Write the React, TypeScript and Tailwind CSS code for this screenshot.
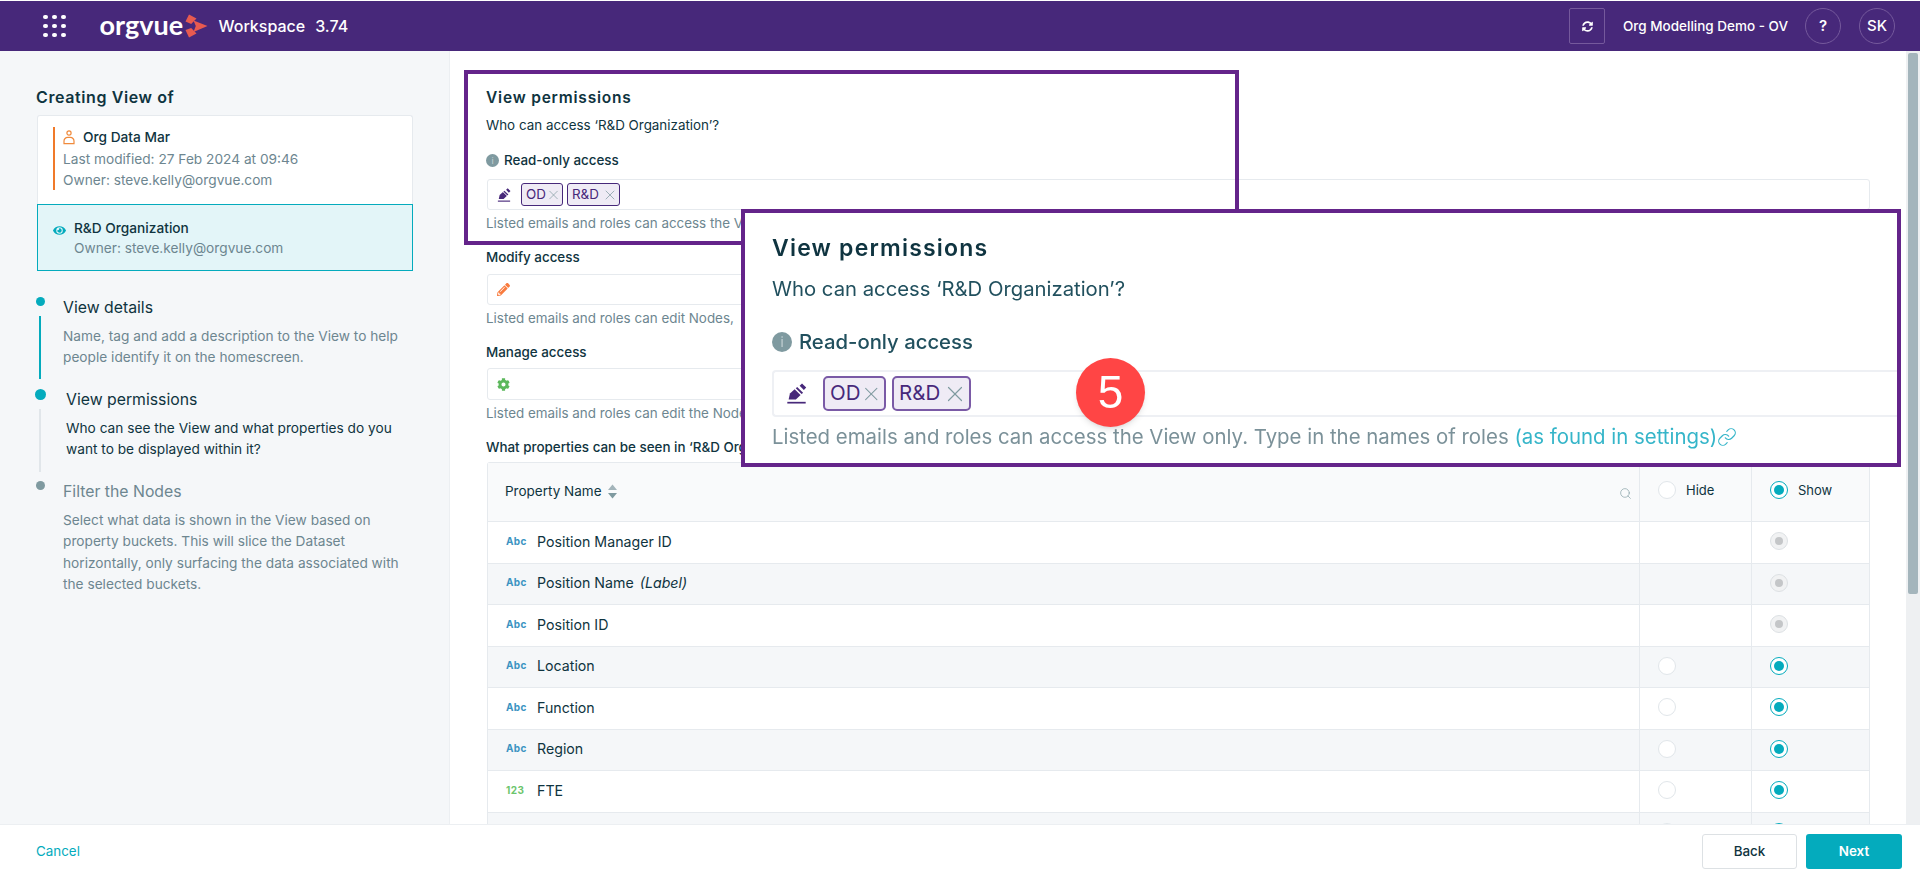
import { FaCog, FaEye, FaPencilAlt, FaSyncAlt } from "react-icons/fa"
import { Link, Search, X } from "lucide-react"

const sans = "font-['Inter',sans-serif]"

const rows = [
  { kind: "Abc", name: "Position Manager ID", locked: true },
  { kind: "Abc", name: "Position Name", label: true, locked: true },
  { kind: "Abc", name: "Position ID", locked: true },
  { kind: "Abc", name: "Location" },
  { kind: "Abc", name: "Function" },
  { kind: "Abc", name: "Region" },
  { kind: "123", name: "FTE" },
  { kind: "", name: "" },
]

function ReadOnlyIcon({ size }: { size: number }) {
  return (
    <svg width={size} height={size} viewBox="0 0 16 16" className="text-[#47287a] shrink-0">
      <path d="M1 15h14" stroke="currentColor" strokeWidth="1.3" />
      <path d="M2 12.6 3 8 8.5 3 13 7.5 7.5 12.6Z" fill="currentColor" />
      <path d="M10.4 2 12.2 0.4 15.4 3.4 13.6 5.4Z" fill="currentColor" />
      <path d="M4.6 2 14 11.2" stroke="#fff" strokeWidth="1.1" />
    </svg>
  )
}

function PersonIcon() {
  return (
    <svg width="12" height="15" viewBox="0 0 12 15" fill="none" stroke="#f08a3c" strokeWidth="1.2" className="shrink-0">
      <circle cx="6" cy="3" r="2.1" />
      <path d="M1 13.6V11a3.6 3.6 0 0 1 3.6-3.6h2.8A3.6 3.6 0 0 1 11 11v2.6Z" />
    </svg>
  )
}

function InfoIcon({ big }: { big?: boolean }) {
  return (
    <span
      className={
        big
          ? "w-5 h-5 rounded-full bg-[#7f9aa0] text-[#c5d2d5] text-[13px] leading-5 text-center shrink-0"
          : "w-[13px] h-[13px] rounded-full bg-[#7f9aa0] text-[#c5d2d5] text-[9px] leading-[13px] text-center shrink-0"
      }
    >
      i
    </span>
  )
}

function Chip({ text, big, wide }: { text: string; big?: boolean; wide?: boolean }) {
  if (big) {
    return (
      <span className={`${wide ? "w-[79px]" : "w-[63px]"} h-[35px] flex items-center justify-between border-2 border-[#7a5aa6] rounded-[5px] bg-[#efebf5] text-[#47287a] text-[20.5px] pl-[5px] pr-[1px]`}>
        {text}
        <X size={26} strokeWidth={1.1} className="text-[#7f9aa0]" />
      </span>
    )
  }
  return (
    <span className={`${wide ? "w-[53px]" : "w-[42px]"} h-[23px] flex items-center justify-between border border-[#47287a] rounded-[3px] bg-[#efebf5] text-[#47287a] text-[13.4px] pl-[4px] pr-[1px]`}>
      {text}
      <X size={16} strokeWidth={1.1} className="text-[#7f9aa0]" />
    </span>
  )
}

function InputBox({ children, tall }: { children?: React.ReactNode; tall?: boolean }) {
  return (
    <div className={`${tall ? "h-[32px]" : "h-[31px]"} border border-[#e6eaee] rounded-[3px] bg-white flex items-center pl-[9px] gap-[10px]`}>
      {children}
    </div>
  )
}

function Help({ children }: { children: React.ReactNode }) {
  return <p className="mt-[3px] h-5 leading-5 text-[13.4px] text-[#6d8690] whitespace-nowrap">{children}</p>
}

function Heading({ children, mt }: { children: React.ReactNode; mt: string }) {
  return <h3 className={`${mt} h-5 leading-5 text-[13.4px] font-medium text-[#0f3440] whitespace-nowrap`}>{children}</h3>
}

function Radio({ state }: { state: "on" | "off" | "locked" }) {
  if (state === "on") {
    return (
      <span className="w-[18px] h-[18px] rounded-full border-[1.5px] border-[#04abbd] bg-white flex items-center justify-center">
        <span className="w-[10px] h-[10px] rounded-full bg-[#04abbd]" />
      </span>
    )
  }
  if (state === "locked") {
    return (
      <span className="w-[18px] h-[18px] rounded-full border border-[#dde1e4] bg-[#f1f2f3] flex items-center justify-center">
        <span className="w-[8px] h-[8px] rounded-full bg-[#c4c6c8]" />
      </span>
    )
  }
  return <span className="block w-[18px] h-[18px] rounded-full border border-[#e1e6ea] bg-white" />
}

function Step({
  dotClass,
  lineClass,
  title,
  text,
  titleClass,
  textClass,
  indent,
  height,
}: {
  dotClass: string
  lineClass?: string
  title: string
  text: string[]
  titleClass: string
  textClass: string
  indent: string
  height: string
}) {
  return (
    <div className={`flex ${height}`}>
      <div className="w-[26px] flex flex-col items-center shrink-0 ml-[27px]">
        <span className={`${dotClass} rounded-full shrink-0`} />
        {lineClass && <span className={`${lineClass} w-[2px] shrink-0`} />}
      </div>
      <div className={indent}>
        <div className={`h-5 leading-5 text-[15.8px] ${titleClass}`}>{title}</div>
        <div className="mt-[8px]">
          {text.map((line) => (
            <div key={line} className={`h-[21.3px] leading-[21.3px] text-[13.7px] whitespace-nowrap ${textClass}`}>
              {line}
            </div>
          ))}
        </div>
      </div>
    </div>
  )
}

export default function App() {
  return (
    <div className={`${sans} relative w-full h-[878px] overflow-hidden flex flex-col bg-white`}>
      {/* Top bar */}
      <header className="mt-px h-[50px] shrink-0 bg-[#47287a] flex items-center text-white">
        <div className="ml-[43px] grid grid-cols-3 gap-x-[4.5px] gap-y-[4.5px]">
          {Array.from({ length: 9 }).map((_, i) => (
            <span key={i} className="w-[4.5px] h-[4.5px] rounded-full bg-white" />
          ))}
        </div>
        <span className="ml-[34px] text-[27px] leading-none font-bold font-['Lato',sans-serif] -mt-[4px] w-[80px] whitespace-nowrap">orgvue</span>
        <svg width="24" height="24" viewBox="0 0 24 24" className="ml-[4px] shrink-0">
          <path d="M5 0.5 12.5 4.5 7.2 10 1.5 7.6Z" fill="#e85a50" />
          <path d="M9.5 6.5 23.5 12 9.5 18 11.8 12Z" fill="#e85a50" />
          <path d="M1.5 16 7.2 14 12.5 19.5 5 23.5Z" fill="#e85a50" />
        </svg>
        <span className="ml-[11px] text-[16px] font-medium">Workspace</span>
        <span className="ml-[10px] text-[16px] font-medium">3.74</span>
        <div className="ml-auto flex items-center mr-[25px]">
          <span className="w-9 h-9 border border-[#75599c] rounded-[2px] flex items-center justify-center">
            <FaSyncAlt size={11} />
          </span>
          <span className="ml-[18px] text-[13.5px] font-medium w-[164px] whitespace-nowrap">Org Modelling Demo - OV</span>
          <span className="ml-[18px] w-9 h-9 rounded-full border border-[#75599c] flex items-center justify-center text-[15px] font-semibold">?</span>
          <span className="ml-[18px] w-9 h-9 rounded-full border border-[#75599c] flex items-center justify-center text-[15px] font-medium">SK</span>
        </div>
      </header>

      <div className="flex-1 min-h-0 flex">
        {/* Sidebar */}
        <aside className="w-[450px] shrink-0 bg-[#f5f7f9] border-r border-[#eceff2]">
          <h2 className="ml-[36px] mt-[36px] h-5 leading-5 text-[16px] font-semibold tracking-[0.6px] text-[#0f3440]">Creating View of</h2>
          <div className="ml-[37px] mt-[8px] w-[376px]">
            <div className="h-[89px] bg-white border border-[#e6eaee] border-b-0 rounded-t-[3px] pt-[12px] pl-[15px]">
              <div className="h-[63px] border-l-2 border-[#f07a2a] pl-[8px]">
                <div className="flex items-center gap-[8px] h-[20px] -mt-[1px]">
                  <PersonIcon />
                  <span className="text-[13.7px] font-medium text-[#0f3440]">Org Data Mar</span>
                </div>
                <div className="mt-[2px] h-[21px] leading-[21px] text-[13.7px] text-[#6d8690] whitespace-nowrap">Last modified: 27 Feb 2024 at 09:46</div>
                <div className="h-[21px] leading-[21px] text-[13.7px] text-[#6d8690] whitespace-nowrap">Owner: steve.kelly@orgvue.com</div>
              </div>
            </div>
            <div className="h-[67px] bg-[#e3f5f8] border border-[#04abbd] pl-[15px] pt-[13px] flex">
              <FaEye size={13} className="text-[#04abbd] mt-[6px] shrink-0" />
              <div className="ml-[8px]">
                <div className="h-[20px] leading-[20px] text-[13.7px] font-medium text-[#0f3440]">R&amp;D Organization</div>
                <div className="h-[21px] leading-[21px] text-[13.7px] text-[#6d8690] whitespace-nowrap">Owner: steve.kelly@orgvue.com</div>
              </div>
            </div>
          </div>
          <div className="mt-[26px]">
            <Step
              height="h-[92px]"
              dotClass="w-[9px] h-[9px] mb-[10px] bg-[#04abbd]"
              lineClass="h-[63px] bg-[#04abbd]"
              title="View details"
              text={["Name, tag and add a description to the View to help", "people identify it on the homescreen."]}
              titleClass="text-[#0f3440]"
              textClass="text-[#6d8690]"
              indent="ml-[10px] mt-px"
            />
            <Step
              height="h-[92px]"
              dotClass="w-[11px] h-[11px] mb-[9px] bg-[#04abbd]"
              lineClass="h-[63px] bg-[#e1e6ea]"
              title="View permissions"
              text={["Who can see the View and what properties do you", "want to be displayed within it?"]}
              titleClass="text-[#0f3440]"
              textClass="text-[#0f3440]"
              indent="ml-[13px] mt-px"
            />
            <Step
              height="h-[110px]"
              dotClass="w-[9px] h-[9px] bg-[#7f9aa0]"
              title="Filter the Nodes"
              text={[
                "Select what data is shown in the View based on",
                "property buckets. This will slice the Dataset",
                "horizontally, only surfacing the data associated with",
                "the selected buckets.",
              ]}
              titleClass="text-[#6d8690]"
              textClass="text-[#6d8690]"
              indent="ml-[10px] mt-px"
            />
          </div>
        </aside>

        {/* Main form */}
        <main className="flex-1 min-w-0 overflow-hidden pl-[36px] pr-[36px]">
          <h2 className="mt-[37px] h-5 leading-5 text-[15.5px] font-semibold tracking-[0.8px] text-[#0f3440]">View permissions</h2>
          <p className="mt-[7px] h-5 leading-5 text-[13.4px] text-[#0f3440]">Who can access ‘R&amp;D Organization’?</p>
          <div className="mt-[15px] h-5 flex items-center gap-[5px]">
            <InfoIcon />
            <span className="text-[13.4px] font-medium text-[#0f3440]">Read-only access</span>
          </div>
          <div className="mt-[9px] ml-px">
            <InputBox>
              <ReadOnlyIcon size={14} />
              <div className="flex gap-[4px]">
                <Chip text="OD" />
                <Chip text="R&D" wide />
              </div>
            </InputBox>
          </div>
          <Help>Listed emails and roles can access the View only.</Help>
          <Heading mt="mt-[14px]">Modify access</Heading>
          <div className="mt-[7px] ml-px">
            <InputBox>
              <FaPencilAlt size={13} className="text-[#f97b3e]" />
            </InputBox>
          </div>
          <Help>Listed emails and roles can edit Nodes,</Help>
          <Heading mt="mt-[14px]">Manage access</Heading>
          <div className="mt-[6px] ml-px">
            <InputBox tall>
              <FaCog size={13} className="text-[#5cb85c]" />
            </InputBox>
          </div>
          <Help>Listed emails and roles can edit the Nodes</Help>
          <Heading mt="mt-[14px]">What properties can be seen in ‘R&amp;D Organization’?</Heading>

          <div className="mt-[5px] ml-px border-l border-r border-t border-[#e6eaee] rounded-t-[3px] text-[13.5px] text-[#0f3440]">
            <div className="h-[59px] bg-[#f9fafb] border-b border-[#e6eaee] grid grid-cols-[1fr_112px_118px]">
              <div className="flex items-start pt-[19px] pl-[17px] pr-[7px]">
                <span className="leading-[18px]">Property Name</span>
                <svg width="9" height="15" viewBox="0 0 9 15" className="ml-[6px] mt-[2px]">
                  <path d="M4.5 0.5 9 6H0Z" fill="#a3b4ba" />
                  <path d="M4.5 14.5 9 9H0Z" fill="#7f9aa0" />
                </svg>
                <Search size={13} strokeWidth={1.2} className="ml-auto mt-[5px] text-[#7f9aa0]" />
              </div>
              <div className="border-l border-[#e6eaee] flex items-start pt-[18px] pl-[18px] gap-[10px]">
                <Radio state="off" />
                <span className="leading-[18px] text-[13px]">Hide</span>
              </div>
              <div className="border-l border-[#e6eaee] flex items-start pt-[18px] pl-[18px] gap-[10px]">
                <Radio state="on" />
                <span className="leading-[18px] text-[13px]">Show</span>
              </div>
            </div>
            {rows.map((row, i) => (
              <div
                key={i}
                className={`h-[41.5px] border-b border-[#e6eaee] grid grid-cols-[1fr_112px_118px] ${i % 2 === 1 ? "bg-[#f5f7f9]" : "bg-white"}`}
              >
                <div className="flex items-center pl-[18px] pb-[2px]">
                  <span className={`w-[31px] text-[10px] font-bold tracking-[0.4px] ${row.kind === "123" ? "text-[#6cc56c]" : "text-[#3b93c2]"}`}>{row.kind}</span>
                  <span className="text-[14.2px]">{row.name}</span>
                  {row.label && <em className="ml-[6px] text-[14.2px]">(Label)</em>}
                </div>
                <div className="border-l border-[#e6eaee] flex items-center pl-[18px] pb-[2px]">
                  {!row.locked && <Radio state="off" />}
                </div>
                <div className="border-l border-[#e6eaee] flex items-center pl-[18px] pb-[2px]">
                  <Radio state={row.locked ? "locked" : "on"} />
                </div>
              </div>
            ))}
          </div>
        </main>

        {/* Scrollbar */}
        <div className="w-[14px] shrink-0 bg-[#eef0f2] pt-[2px] pl-[2px] pr-[2px]">
          <div className="h-[541px] rounded-[2px] bg-[#a4b5bc]" />
        </div>
      </div>

      {/* Footer */}
      <footer className="h-[54px] shrink-0 bg-white border-t border-[#eceff2] flex items-center pl-[36px] pr-[18px] text-[13.4px]">
        <span className="text-[#04abbd]">Cancel</span>
        <button className="ml-auto w-[95px] h-[35px] border border-[#dde1e4] rounded-[3px] bg-white text-[#0f3440] font-medium">Back</button>
        <button className="ml-[9px] w-[96px] h-[35px] rounded-[3px] bg-[#04abbd] text-white font-semibold">Next</button>
      </footer>

      {/* Callout frame around the first section */}
      <div className="absolute left-[464px] top-[70px] w-[775px] h-[175px] border-[4px] border-[#64248a]" />

      {/* Zoomed callout, a blown-up copy of the section so slightly soft */}
      <div className="absolute left-[741px] top-[209px] w-[1160px] h-[258px] border-[4px] border-[#64248a] bg-white overflow-hidden">
        <div className="pl-[27px] text-[#0f3440] blur-[0.4px]">
          <div className="mt-[20px] h-[30px] leading-[30px] text-[23px] font-semibold tracking-[1.2px]">View permissions</div>
          <div className="mt-[11px] h-[30px] leading-[30px] text-[20.3px] text-[#21505e]">Who can access ‘R&amp;D Organization’?</div>
          <div className="mt-[23px] h-[30px] flex items-center gap-[7px]">
            <InfoIcon big />
            <span className="text-[20.3px] font-medium text-[#21505e]">Read-only access</span>
          </div>
          <div className="mt-[13px] h-[47px] border-2 border-r-0 border-[#eef0f4] rounded-l-[4px] flex items-center pl-[12px] gap-[16px]">
            <ReadOnlyIcon size={21} />
            <div className="flex gap-[6px]">
              <Chip text="OD" big />
              <Chip text="R&D" big wide />
            </div>
          </div>
          <div className="mt-[5px] h-[30px] leading-[30px] text-[20.4px] text-[#7b9199] whitespace-nowrap flex items-center">
            Listed emails and roles can access the View only. Type in the names of roles&nbsp;
            <span className="text-[#35b5c9]">(as found in settings)</span>
            <Link size={20} strokeWidth={1.4} className="text-[#35b5c9]" />
          </div>
        </div>
      </div>
      <div className="absolute left-[1076px] top-[358px] w-[69px] h-[69px] rounded-full bg-[#ff4545] shadow-md text-white text-[46px] leading-[69px] text-center font-['Liberation_Sans',sans-serif]">
        5
      </div>
    </div>
  )
}
